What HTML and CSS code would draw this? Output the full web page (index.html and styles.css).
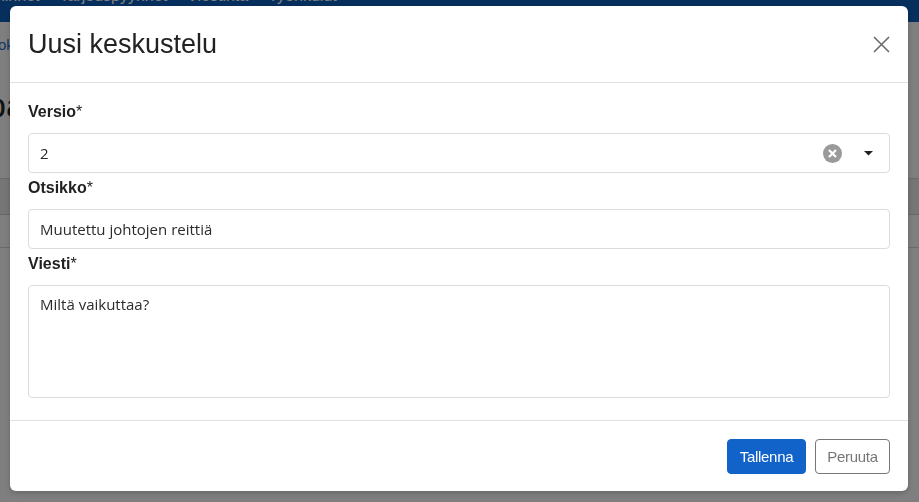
FILE: index.html
```html
<!DOCTYPE html>
<html>
  <head>
    <meta charset="UTF-8" />
    <meta name="viewport" content="width=device-width, initial-scale=1.0" />
    <title>Uusi keskustelu</title>
    <link rel="stylesheet" href="styles.css">
  </head>

  <body>
    <nav class="navbar">
      <ul class="nav-links">
        <li>Toiminnot</li>
        <li>Tarjouspyynnöt</li>
        <li>Viestintä</li>
        <li>Työnkulut</li>
      </ul>
    </nav>

    <main class="page">
      <div class="crumbs"><a href="#">ok</a> / Keskustelut</div>
      <h1 class="page-title">pa</h1>
      <table class="list">
        <thead>
          <tr><th>&nbsp;</th><th>&nbsp;</th></tr>
        </thead>
        <tbody>
          <tr><td>&nbsp;</td><td>&nbsp;</td></tr>
        </tbody>
      </table>
    </main>

    <div class="backdrop"></div>

    <div class="modal">
      <div class="modal-header">
        <h2 class="modal-title">Uusi keskustelu</h2>
        <button class="close" aria-label="Sulje">
          <svg width="17" height="17" viewBox="0 0 17 17">
            <path d="M1 1 L16 16 M16 1 L1 16" stroke="#6b6b6b" stroke-width="1.6" fill="none" />
          </svg>
        </button>
      </div>

      <div class="modal-body">
        <label class="field-label">Versio<span class="req">*</span></label>
        <div class="select">
          <span class="select-value">2</span>
          <span class="select-clear">
            <svg width="19" height="19" viewBox="0 0 19 19">
              <circle cx="9.5" cy="9.5" r="9.5" fill="#9a9a9a" />
              <path d="M6 6 L13 13 M13 6 L6 13" stroke="#fff" stroke-width="2.2" />
            </svg>
          </span>
          <span class="select-caret">
            <svg width="9" height="5" viewBox="0 0 9 5">
              <path d="M0 0 L9 0 L4.5 4.5 Z" fill="#222" />
            </svg>
          </span>
        </div>

        <label class="field-label">Otsikko<span class="req">*</span></label>
        <input class="input" type="text" value="Muutettu johtojen reittiä" />

        <label class="field-label">Viesti<span class="req">*</span></label>
        <textarea class="input textarea">Miltä vaikuttaa?</textarea>
      </div>

      <div class="modal-footer">
        <button class="btn btn-primary">Tallenna</button>
        <button class="btn btn-outline">Peruuta</button>
      </div>
    </div>
  </body>
</html>
```

FILE: styles.css
```css
body {
  margin: 0;
  background-color: #fff;
  font-family: "Liberation Sans", Arial, sans-serif;
  color: #212529;
  overflow: hidden;
}

/* page behind the dialog */
.navbar {
  height: 22px;
  background-color: #0c5fbd;
  overflow: hidden;
}
.nav-links {
  list-style: none;
  margin: -13px 0 0 -29px;
  padding: 0;
  display: flex;
  column-gap: 20px;
  font-size: 16px;
  line-height: 18px;
  color: #fff;
}

.crumbs {
  margin: 13px 0 0 -2px;
  font-size: 15px;
  line-height: 20px;
  color: #666;
}
.crumbs a {
  color: #2a6fc7;
  text-decoration: none;
}
.page-title {
  margin: 30px 0 0 -13px;
  font-size: 34px;
  font-weight: normal;
  line-height: 40px;
}
.list {
  margin-top: 53px;
  width: 100%;
  border-collapse: collapse;
}
.list th {
  height: 35px;
  padding: 0;
  background-color: #ececec;
  border-top: 1px solid #d6d6d6;
  border-bottom: 1px solid #cfcfcf;
}
.list td {
  height: 32px;
  padding: 0;
  border-bottom: 1px solid #d6d6d6;
}

.backdrop {
  position: fixed;
  inset: 0;
  background-color: rgba(0, 0, 0, 0.5);
}

/* dialog */
.modal {
  position: fixed;
  top: 6px;
  left: 10px;
  width: 898px;
  background-color: #fff;
  border-radius: 6px;
  box-shadow: 0 2px 6px rgba(0, 0, 0, 0.2);
}

.modal-header {
  display: flex;
  align-items: center;
  justify-content: space-between;
  padding: 18px;
  border-bottom: 1px solid #dee2e6;
}
.modal-title {
  margin: 0;
  font-size: 27px;
  font-weight: normal;
  line-height: 40px;
  color: #222;
}
.close {
  border: 0;
  background: none;
  padding: 0;
  width: 17px;
  height: 17px;
  display: flex;
}

.modal-body {
  padding: 14px 18px 22px 18px;
  display: flex;
  flex-direction: column;
}

.field-label {
  padding-top: 3px;
  margin-bottom: 9px;
  font-size: 16px;
  font-weight: bold;
  line-height: 24px;
  color: #222;
}
.req {
  font-weight: normal;
}

.select,
.input {
  box-sizing: border-box;
  height: 40px;
  border: 1px solid #dcdcdc;
  border-radius: 4px;
  background-color: #fff;
  font-family: "Open Sans", sans-serif;
  font-size: 15px;
  color: #2b2b2b;
}

.select {
  display: flex;
  align-items: center;
  padding: 0 10px 0 11px;
}
.select-value {
  flex: 1;
}
.select-clear {
  display: flex;
  margin-right: 22px;
}
.select-caret {
  display: flex;
  margin-right: 6px;
}

.input {
  width: 100%;
  padding: 0 11px;
  outline: none;
}
.textarea {
  height: 113px;
  padding: 7px 11px;
  resize: none;
  line-height: 22px;
}

.modal-footer {
  display: flex;
  justify-content: flex-end;
  column-gap: 9px;
  padding: 18px 18px 17px 18px;
  border-top: 1px solid #dee2e6;
}
.btn {
  box-sizing: border-box;
  height: 35px;
  padding: 0 8px;
  border-radius: 4px;
  font-family: "Liberation Sans", Arial, sans-serif;
  font-size: 15px;
  letter-spacing: -0.3px;
}
.btn-primary {
  width: 79px;
  border: 1px solid #1162c9;
  background-color: #1162c9;
  color: #fff;
}
.btn-outline {
  width: 75px;
  border: 1px solid #777;
  background-color: #fff;
  color: #777;
}
```
